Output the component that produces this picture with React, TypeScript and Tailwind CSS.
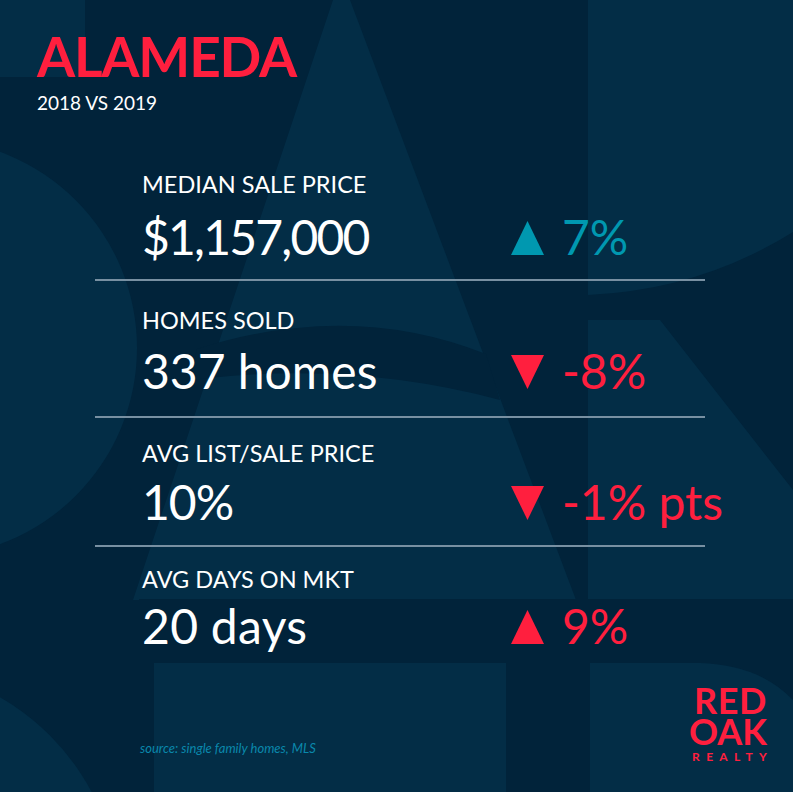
import React from 'react'

type Stat = {
  label: string
  value: string
  change: string
  up: boolean
  tone: 'teal' | 'red'
  labelGap: string
  valueGap: string
  valueTrack: string
}

const stats: Stat[] = [
  { label: 'MEDIAN SALE PRICE', value: '$1,157,000', change: '7%', up: true, tone: 'teal', labelGap: 'mt-[61px]', valueGap: 'mt-[16px]', valueTrack: 'tracking-[-1.8px]' },
  { label: 'HOMES SOLD', value: '337 homes', change: '-8%', up: false, tone: 'red', labelGap: 'mt-[28px]', valueGap: 'mt-[15px]', valueTrack: 'tracking-[0px]' },
  { label: 'AVG LIST/SALE PRICE', value: '10%', change: '-1% pts', up: false, tone: 'red', labelGap: 'mt-[24px]', valueGap: 'mt-[12px]', valueTrack: 'tracking-[-1px]' },
  { label: 'AVG DAYS ON MKT', value: '20 days', change: '9%', up: true, tone: 'red', labelGap: 'mt-[21px]', valueGap: 'mt-[11px]', valueTrack: 'tracking-[0.3px]' }
]

// faint giant letter shapes behind the content
function Backdrop() {
  return (
    <svg className="absolute inset-0" width="793" height="792" viewBox="0 0 793 792">
      <g fill="#032d46">
        <rect x="0" y="0" width="85" height="77" />
        <circle cx="-72" cy="348" r="209" />
        <polygon points="333,0 350,0 576,600 133,600" />
        <path d="M588 0 H793 V232 Q700 290 588 295 Z" />
        <polygon points="588,320 660,320 793,490 793,599 588,599" />
        <rect x="154" y="663" width="352" height="129" />
        <path d="M590 663 H700 Q760 665 793 700 V792 H590 Z" />
        <circle cx="-120" cy="905" r="240" />
      </g>
      <g fill="#01233a">
        <path d="M197 349 Q350 300 486 354 L500 400 Q350 360 190 380 Z" />
        <rect x="139" y="599" width="654" height="64" />
      </g>
    </svg>
  )
}

function Triangle({ up, tone }: { up: boolean; tone: 'teal' | 'red' }) {
  const fill = tone === 'teal' ? '#0098b0' : '#ff1f3e'
  return (
    <svg className="mt-[8px] shrink-0" width="33" height="34" viewBox="0 0 33 34">
      <polygon points={up ? '16.5,0 33,34 0,34' : '0,0 33,0 16.5,34'} fill={fill} />
    </svg>
  )
}

export default function App() {
  return (
    <div className="relative w-[793px] h-[792px] overflow-hidden bg-[#01233a] font-['Lato',sans-serif]">
      <Backdrop />
      <div className="relative flex flex-col h-full">
        <header className="pl-[37px] pt-[29px]">
          <h1 className="text-[55px] leading-none font-bold tracking-[-1.2px] text-[#ff1f3e]">ALAMEDA</h1>
          <p className="mt-[9px] text-[19px] leading-none text-white">2018 VS 2019</p>
        </header>

        <div className="ml-[95px] w-[610px]">
          {stats.map((s, i) => (
            <div key={s.label}>
              <div className={`${s.labelGap} pl-[47px]`}>
                <p className="text-[23.5px] leading-none text-white whitespace-nowrap">{s.label}</p>
                <div className={`${s.valueGap} flex items-start`}>
                  <span className={`w-[369px] shrink-0 text-[48px] leading-none text-white whitespace-nowrap ${s.valueTrack}`}>
                    {s.value}
                  </span>
                  <Triangle up={s.up} tone={s.tone} />
                  <span
                    className={`ml-[18px] shrink-0 text-[48px] leading-none whitespace-nowrap ${s.tone === 'teal' ? 'text-[#0098b0]' : 'text-[#ff1f3e]'}`}
                  >
                    {s.change}
                  </span>
                </div>
              </div>
              {i < stats.length - 1 && (
                <div className={`h-[2px] bg-[#7890a2] ${i === 2 ? 'mt-[19px]' : i === 1 ? 'mt-[21px]' : 'mt-[18px]'}`} />
              )}
            </div>
          ))}
        </div>

        <footer className="mt-auto flex items-end justify-between pl-[140px] pr-[26px] pb-[29px]">
          <p className="mb-[8px] text-[13px] leading-none italic text-[#0a88ac]">source: single family homes, MLS</p>
          <div className="flex flex-col items-end font-bold text-[#ff1f3e]">
            <span className="text-[36px] leading-[31px] tracking-[0.6px]">RED</span>
            <span className="text-[36px] leading-[31px]">OAK</span>
            <span className="mt-[4px] mr-[-6px] text-[12px] leading-none tracking-[6.3px]">REALTY</span>
          </div>
        </footer>
      </div>
    </div>
  )
}
